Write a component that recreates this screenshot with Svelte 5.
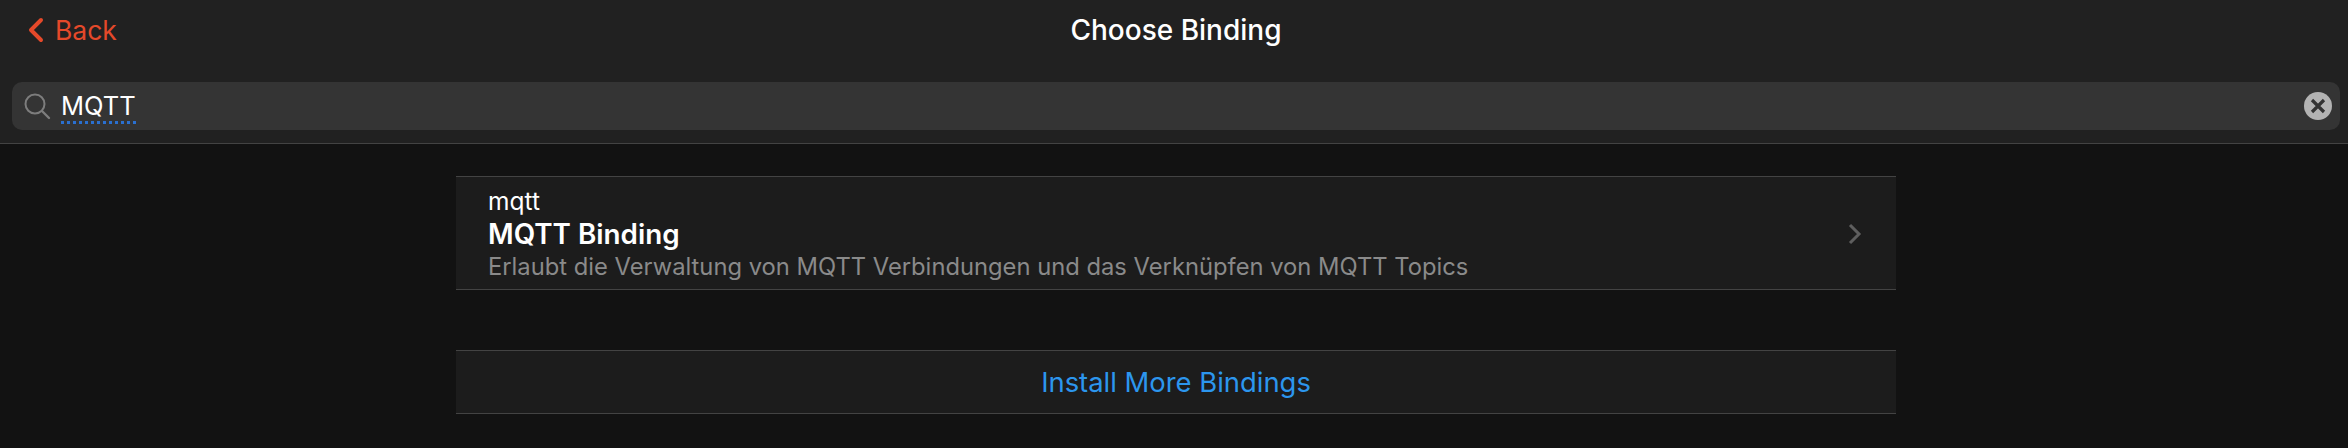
<script>
  const query = 'MQTT';
</script>

<div class="page">
  <header class="top">
    <div class="nav">
      <div class="back">
        <svg class="back-icon" width="18" height="26" viewBox="0 0 18 26"><path d="M14 3 L4 13 L14 23" fill="none" stroke="#e5492a" stroke-width="4" stroke-linecap="round" stroke-linejoin="round"/></svg>
        <span>Back</span>
      </div>
      <div class="title">Choose Binding</div>
    </div>
    <div class="search">
      <svg class="glass" width="28" height="28" viewBox="0 0 28 28"><circle cx="12" cy="12" r="9.5" fill="none" stroke="#7d7d7d" stroke-width="2"/><path d="M19 19 L26 26" stroke="#7d7d7d" stroke-width="2.4" stroke-linecap="round"/></svg>
      <div class="field"><span class="query">{query}</span></div>
      <svg class="clear" width="28" height="28" viewBox="0 0 28 28"><circle cx="14" cy="14" r="14" fill="#b3b3b3"/><path d="M8 8 L20 20 M20 8 L8 20" stroke="#333" stroke-width="3.2"/></svg>
    </div>
  </header>

  <main class="content">
    <section class="list">
      <div class="row">
        <div class="texts">
          <div class="id">mqtt</div>
          <div class="name">MQTT Binding</div>
          <div class="desc">Erlaubt die Verwaltung von MQTT Verbindungen und das Verknüpfen von MQTT Topics</div>
        </div>
        <svg class="chev" width="14" height="22" viewBox="0 0 14 22"><path d="M2 2 L11 11 L2 20" fill="none" stroke="#5e5e5e" stroke-width="3"/></svg>
      </div>
    </section>
    <section class="list action">Install More Bindings</section>
  </main>
</div>

<style>
  :global(body) {
    margin: 0;
    background: #121212;
  }
  .page {
    width: 2348px;
    height: 448px;
    overflow: hidden;
    background: #121212;
    color: #fff;
    font-family: Inter, "Liberation Sans", sans-serif;
  }
  .top {
    height: 143px;
    background: #212121;
    border-bottom: 1px solid #434343;
    padding: 0 8px 0 12px;
  }
  .nav {
    height: 82px;
    position: relative;
    display: flex;
    justify-content: center;
  }
  .back {
    position: absolute;
    left: 15px;
    top: 12px;
    display: flex;
    align-items: center;
    gap: 10px;
    color: #e5492a;
    font-size: 26.5px;
    line-height: 36px;
  }
  .title {
    margin-top: 12px;
    font-size: 28px;
    font-weight: 500;
    line-height: 36px;
  }
  .search {
    height: 48px;
    background: #343434;
    border-radius: 10px;
    display: flex;
    align-items: center;
    padding: 0 8px 0 11px;
  }
  .glass {
    margin-right: 10px;
  }
  .field {
    flex: 1;
    display: flex;
  }
  .query {
    font-size: 25.5px;
    line-height: 30px;
    height: 30px;
    border-bottom: 3px dotted #2a70d0;
    margin-top: 3px;
  }
  .clear {
    flex: none;
  }
  .content {
    width: 1440px;
    margin-left: 456px;
    padding-top: 32px;
    display: flex;
    flex-direction: column;
    gap: 60px;
  }
  .list {
    background: #1c1c1c;
    border-top: 1px solid #434343;
    border-bottom: 1px solid #434343;
  }
  .row {
    height: 112px;
    display: flex;
    align-items: center;
    padding: 0 34px 0 32px;
  }
  .texts {
    flex: 1;
    padding-top: 1px;
  }
  .id {
    font-size: 24.5px;
    line-height: 30px;
  }
  .name {
    font-size: 27.8px;
    font-weight: 600;
    line-height: 36px;
  }
  .desc {
    font-size: 23.75px;
    line-height: 29px;
    color: #8a8a8a;
  }
  .chev {
    margin-top: 2px;
  }
  .action {
    height: 62px;
    display: flex;
    align-items: center;
    justify-content: center;
    font-size: 27.4px;
    color: #2c96ee;
  }
</style>
